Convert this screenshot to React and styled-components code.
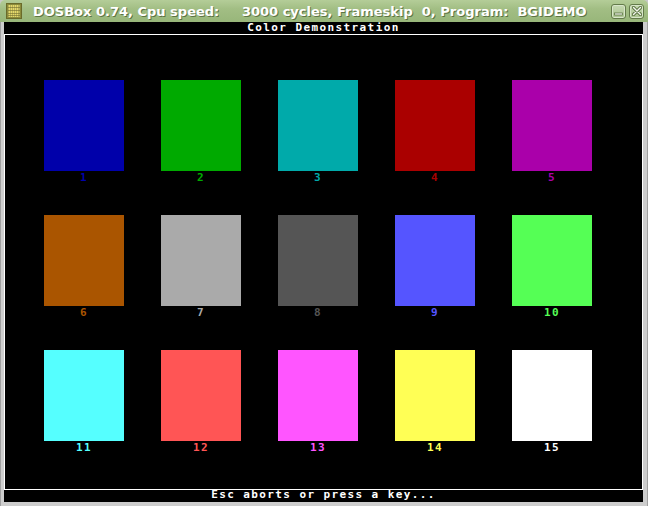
import React from "react";
import styled, { createGlobalStyle } from "styled-components";

const Global = createGlobalStyle`
  html, body { margin: 0; padding: 0; background: #c8c8c8; }
  body { width: 648px; height: 506px; overflow: hidden; }
`;

const Win = styled.div`
  width: 648px;
  height: 506px;
  box-sizing: border-box;
  display: flex;
  flex-direction: column;
  background: #cfcfcf;
  border-radius: 5px 5px 0 0;
  overflow: hidden;
`;

const TitleBar = styled.div`
  height: 22px;
  flex: none;
  display: flex;
  align-items: center;
  background: linear-gradient(#b4cd98 0%, #a2be84 40%, #98b67a 100%);
  padding: 0 4px 0 6px;
  box-sizing: border-box;
`;

const AppIcon = styled.svg`
  width: 16px;
  height: 16px;
  flex: none;
`;

const Title = styled.div`
  margin-left: 11px;
  font-family: "DejaVu Sans", sans-serif;
  font-weight: bold;
  font-size: 13px;
  color: #ffffff;
  white-space: pre;
  text-shadow: 1px 1px 0 #5d7444;
  flex: 1;
`;

const WinBtn = styled.div`
  width: 15px;
  height: 15px;
  border: 1px solid #637a4a;
  border-radius: 3px;
  background: linear-gradient(#c6d9b2, #a9c28e);
  display: flex;
  align-items: center;
  justify-content: center;
  margin-left: 3px;
  box-sizing: border-box;
  box-shadow: inset 0 0 0 1px #d8e6ca;
`;

const Body = styled.div`
  flex: 1;
  display: flex;
  padding: 0 4px 4px 4px;
  background: #cdcdcd;
  border-left: 1px solid #a0a0a0;
  border-right: 1px solid #a0a0a0;
  box-sizing: border-box;
`;

const Screen = styled.div`
  width: 640px;
  height: 480px;
  background: #000;
  display: flex;
  flex-direction: column;
  margin-left: -1px;
`;

const DosText = styled.div`
  font-family: "DejaVu Sans Mono", "Liberation Mono", monospace;
  font-weight: bold;
  font-size: 11px;
  letter-spacing: 1.4px;
  line-height: 8px;
  color: ${(p) => p.$color || "#ffffff"};
  text-align: center;
  white-space: pre;
`;

const Header = styled.div`
  height: 12px;
  display: flex;
  align-items: center;
  justify-content: center;
  padding-bottom: 1px;
  box-sizing: border-box;
`;

const Frame = styled.div`
  height: 456px;
  border: 1px solid #fff;
  box-sizing: border-box;
  display: grid;
  grid-template-columns: repeat(5, 80px);
  grid-auto-rows: 103px;
  column-gap: 37px;
  row-gap: 32px;
  padding: 45px 0 0 39px;
  align-content: start;
`;

const Footer = styled.div`
  flex: 1;
  display: flex;
  align-items: center;
  justify-content: center;
  padding-bottom: 2px;
`;

const Cell = styled.div`
  display: flex;
  flex-direction: column;
  align-items: center;
`;

const Swatch = styled.div`
  width: 80px;
  height: 91px;
  background: ${(p) => p.$color};
`;

const Label = styled(DosText)`
  margin-top: 3px;
`;

const colors = [
  "#0000AA", "#00AA00", "#00AAAA", "#AA0000", "#AA00AA",
  "#AA5500", "#AAAAAA", "#555555", "#5555FF", "#55FF55",
  "#55FFFF", "#FF5555", "#FF55FF", "#FFFF55", "#FFFFFF",
];

export default function App() {
  return (
    <>
      <Global />
      <Win>
        <TitleBar>
          <AppIcon viewBox="0 0 16 16">
            <rect x="0.5" y="0.5" width="15" height="15" fill="#8a8a3a" stroke="#6a6a2a" />
            <rect x="2" y="2" width="12" height="12" fill="#b7b25a" />
            {[3, 5, 7, 9, 11].map((x) => (
              <rect key={x} x={x} y="2" width="1" height="12" fill="#e6d86a" />
            ))}
            {[4, 7, 10, 12].map((y) => (
              <rect key={y} x="2" y={y} width="12" height="1" fill="#6f6a2c" opacity="0.6" />
            ))}
          </AppIcon>
          <Title>{"DOSBox 0.74, Cpu speed:     3000 cycles, Frameskip  0, Program:  BGIDEMO"}</Title>
          <WinBtn>
            <svg width="9" height="9" viewBox="0 0 9 9">
              <rect x="0.5" y="6" width="8" height="2" fill="#f2f6ee" stroke="#5d7444" strokeWidth="0.8" />
            </svg>
          </WinBtn>
          <WinBtn>
            <svg width="10" height="10" viewBox="0 0 10 10">
              <path d="M1.5 1.5 L8.5 8.5 M8.5 1.5 L1.5 8.5" stroke="#5d7444" strokeWidth="3.2" strokeLinecap="round" />
              <path d="M1.5 1.5 L8.5 8.5 M8.5 1.5 L1.5 8.5" stroke="#f2f6ee" strokeWidth="1.4" strokeLinecap="round" />
            </svg>
          </WinBtn>
        </TitleBar>
        <Body>
          <Screen>
            <Header>
              <DosText>Color Demonstration</DosText>
            </Header>
            <Frame>
              {colors.map((c, i) => (
                <Cell key={c}>
                  <Swatch $color={c} />
                  <Label $color={c}>{String(i + 1)}</Label>
                </Cell>
              ))}
            </Frame>
            <Footer>
              <DosText>Esc aborts or press a key...</DosText>
            </Footer>
          </Screen>
        </Body>
      </Win>
    </>
  );
}
